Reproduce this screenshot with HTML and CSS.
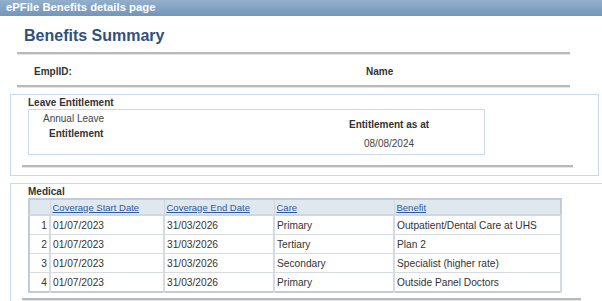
FILE: index.html
```html
<!DOCTYPE html>
<html lang="en">
<head>
    <meta charset="UTF-8">
    <title>ePFile Benefits details page</title>
    <link rel="stylesheet" href="styles.css">
</head>
<body>
    <div class="page-bar">ePFile Benefits details page</div>
    <div class="summary">
        <h1 class="page-title">Benefits Summary</h1>
        <div class="rule"></div>
        <div class="emp-row">
            <span class="emp-id">EmplID:</span>
            <span class="emp-name">Name</span>
        </div>
        <div class="rule flush"></div>
    </div>

    <section class="group leave">
        <h2 class="group-title">Leave Entitlement</h2>
        <div class="leave-box">
            <div class="leave-label">
                <span class="plain">Annual Leave</span>
                <span class="strong">Entitlement</span>
            </div>
            <div class="leave-asat">
                <span class="strong">Entitlement as at</span>
                <span class="date">08/08/2024</span>
            </div>
        </div>
        <div class="rule inner"></div>
    </section>

    <section class="group medical">
        <h2 class="group-title">Medical</h2>
        <table class="grid">
            <thead>
                <tr>
                    <th class="num"></th>
                    <th class="c1"><a href="#">Coverage Start Date</a></th>
                    <th class="c2"><a href="#">Coverage End Date</a></th>
                    <th class="c3"><a href="#">Care</a></th>
                    <th class="c4"><a href="#">Benefit</a></th>
                </tr>
            </thead>
            <tbody>
                <tr><td class="num">1</td><td>01/07/2023</td><td>31/03/2026</td><td>Primary</td><td>Outpatient/Dental Care at UHS</td></tr>
                <tr><td class="num">2</td><td>01/07/2023</td><td>31/03/2026</td><td>Tertiary</td><td>Plan 2</td></tr>
                <tr><td class="num">3</td><td>01/07/2023</td><td>31/03/2026</td><td>Secondary</td><td>Specialist (higher rate)</td></tr>
                <tr><td class="num">4</td><td>01/07/2023</td><td>31/03/2026</td><td>Primary</td><td>Outside Panel Doctors</td></tr>
            </tbody>
        </table>
        <div class="rule inner wide"></div>
    </section>
</body>
</html>
```

FILE: styles.css
```css
/* General */
body {
    margin: 0;
    font-family: "Liberation Sans", Arial, sans-serif;
    font-size: 11px;
    color: #333;
    background: #fff;
    overflow: hidden;
}

/* Top bar */
.page-bar {
    height: 16px;
    line-height: 15px;
    padding-left: 6px;
    background: linear-gradient(#93afcb, #7395bb);
    color: #fff;
    font-weight: bold;
    font-size: 11.3px;
}

/* Summary header */
.summary {
    padding: 0 32px 0 17px;
}

.page-title {
    margin: 9px 0 0 7px;
    font-size: 16px;
    line-height: 22px;
    color: #30507e;
}

.rule {
    height: 2px;
    margin-top: 5px;
    background: #b7b9bc;
    border-bottom: 1px solid #e4e6e8;
}

.rule.flush {
    margin-top: 0;
}

.emp-row {
    display: flex;
    height: 30px;
    padding-top: 3px;
    box-sizing: border-box;
    align-items: center;
    font-size: 10px;
    font-weight: bold;
    color: #333;
}

.emp-id {
    margin-left: 17px;
    width: 332px;
}

/* Groups */
.group {
    margin-left: 10px;
    border: 1px solid #c9d8ea;
    border-right: none;
}

.leave {
    margin-top: 6px;
    margin-right: 3px;
    border-right: 1px solid #c9d8ea;
    height: 80px;
}

.medical {
    margin-top: 7px;
    border-bottom: none;
    height: 120px;
}

.group-title {
    margin: 1px 0 0 17px;
    font-size: 10px;
    line-height: 13px;
    font-weight: bold;
    color: #333;
}

.leave-box {
    display: flex;
    margin-left: 17px;
    width: 455px;
    height: 44px;
    border: 1px solid #c9d8ea;
    font-size: 10px;
}

.leave-label {
    display: flex;
    flex-direction: column;
    padding: 1px 0 0 14px;
    width: 80px;
    line-height: 15px;
}

.leave-label .plain {
    color: #444;
}

.leave-label .strong {
    margin-left: 6px;
}

.leave-asat {
    display: flex;
    flex-direction: column;
    align-items: center;
    margin-left: 226px;
    padding-top: 5px;
    line-height: 19px;
}

.strong {
    font-weight: bold;
    color: #333;
}

.date {
    color: #444;
}

.rule.inner {
    margin: 10px 25px 0 11px;
}

.rule.inner.wide {
    margin: 5px 21px 0 11px;
}

/* Medical grid */
.grid {
    margin: 0 0 0 17px;
    width: 534px;
    border-collapse: collapse;
    border: 2px solid #c3ccd6;
    font-size: 10.2px;
}

.grid th {
    height: 14px;
    padding: 0 2px;
    background: #dfe7ef;
    text-align: left;
    font-size: 9.5px;
    font-weight: normal;
    border: 1px solid #d0d7de;
    border-bottom: 2px solid #d0d7de;
}

.grid th a {
    color: #2c5aa0;
    text-decoration: underline;
}

.grid td {
    height: 18px;
    padding: 0 2px;
    border: 1px solid #d6dbe0;
    border-width: 1px 2px 1px 1px;
    color: #333;
}

.grid td.num,
.grid th.num {
    width: 15px;
    text-align: right;
    background: #fff;
}

.grid th.num {
    background: #dfe7ef;
}

.grid .c1 { width: 109px; }
.grid .c2 { width: 105px; }
.grid .c3 { width: 115px; }
```
